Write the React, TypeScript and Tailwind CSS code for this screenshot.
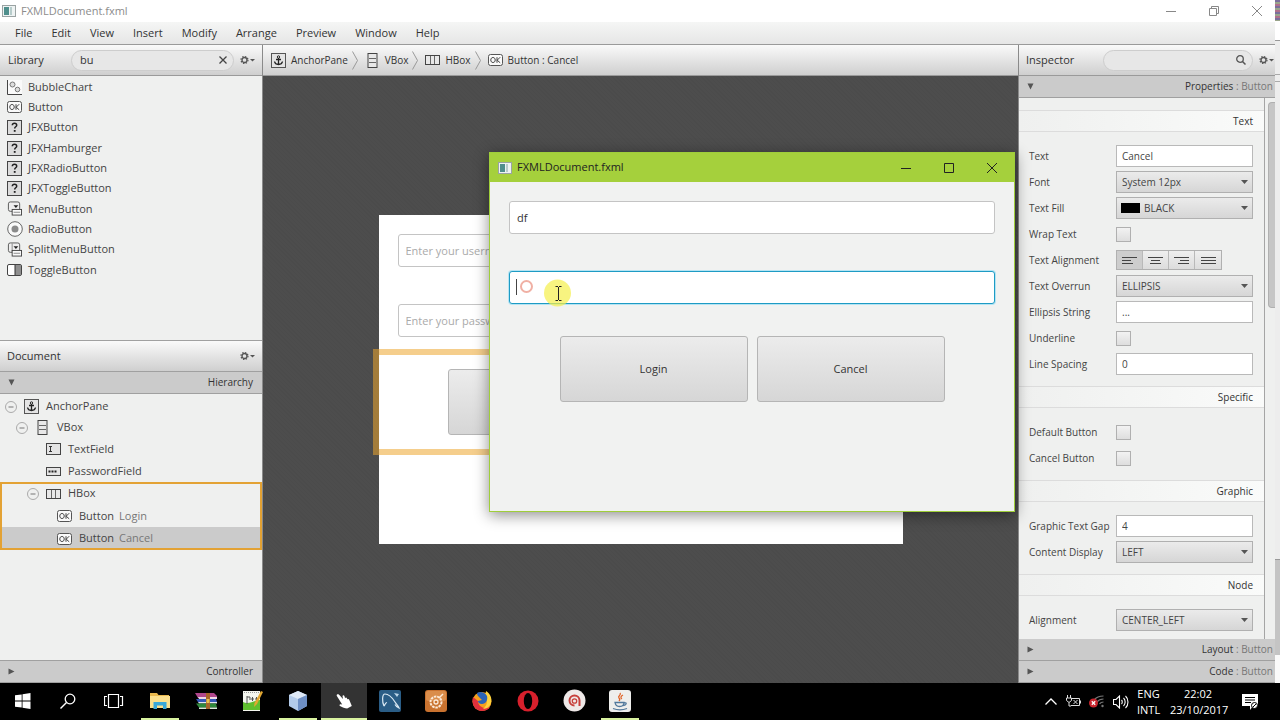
import { useState, type ReactNode } from "react";
import clsx from "clsx";

const MENUS = ["File", "Edit", "View", "Insert", "Modify", "Arrange", "Preview", "Window", "Help"];

const HEADER_BG = "bg-gradient-to-b from-[#fafafa] to-[#cfcfcf]";

/* ---------- component icons ---------- */

function OkIcon() {
  return (
    <svg width="15" height="12" viewBox="0 0 15 12">
      <rect x="0.5" y="0.5" width="14" height="11" rx="2" fill="#fafafa" stroke="#555" />
      <path d="M5 3.5c-1.4 0-2.2 1-2.2 2.5S3.600 8.500 5 8.500 7.200 7.500 7.200 6 6.400 3.500 5 3.500zM9 3.200v5.600M12.200 3.200 9.200 6.200l3 2.600" fill="none" stroke="#444" />
    </svg>
  );
}

function UnknownIcon() {
  return (
    <svg width="15" height="15" viewBox="0 0 15 15">
      <rect x="0.5" y="0.5" width="14" height="14" fill="#dcdcdc" stroke="#444" />
      <path d="M5.300 5.300c.1-1.400 1-2 2.200-2s2.200.7 2.200 1.900c0 1.600-2 1.600-2 3.300" fill="none" stroke="#222" strokeWidth="1.500" />
      <rect x="6.800" y="10" width="1.800" height="1.800" fill="#222" />
    </svg>
  );
}

function BubbleIcon() {
  return (
    <svg width="15" height="15" viewBox="0 0 15 15">
      <path d="M1 0h14v14H1z" fill="#fafafa" />
      <path d="M0.500 0v14.500H15" fill="none" stroke="#444" />
      <circle cx="5.500" cy="4.500" r="2.500" fill="#ddd" stroke="#777" />
      <circle cx="10.500" cy="9.500" r="2.300" fill="#ddd" stroke="#777" />
    </svg>
  );
}

function MenuButtonIcon({ split = false }: { split?: boolean }) {
  return (
    <svg width="16" height="15" viewBox="0 0 16 15">
      <rect x="1.500" y="0.500" width="12" height="10" rx="2" fill="#eee" stroke="#555" />
      {split ? <path d="M5.500 1v9" stroke="#888" /> : null}
      <path d="M7 4h5l-2.500 3z" fill="#222" />
      <rect x="5.500" y="8.500" width="10" height="6" fill="#fafafa" stroke="#444" />
      <path d="M7 11.500h7" stroke="#888" />
    </svg>
  );
}

function RadioIcon() {
  return (
    <svg width="16" height="16" viewBox="0 0 16 16" className="shrink-0">
      <circle cx="8" cy="8" r="7.300" fill="#fafafa" stroke="#666" />
      <circle cx="8" cy="8" r="3.500" fill="#8b8b8b" />
    </svg>
  );
}

function ToggleIcon() {
  return (
    <svg width="15" height="12" viewBox="0 0 15 12">
      <rect x="0.500" y="0.500" width="14" height="11" rx="1.500" fill="#fff" stroke="#444" />
      <path d="M8 1h6v10H8z" fill="#8f8f8f" />
      <path d="M8 1v10" stroke="#333" />
    </svg>
  );
}

function AnchorIcon() {
  return (
    <svg width="15" height="15" viewBox="0 0 15 15">
      <rect x="0.500" y="0.500" width="14" height="14" fill="#e4e4e4" stroke="#555" />
      <circle cx="7.500" cy="4" r="1.200" fill="none" stroke="#222" />
      <path d="M7.500 5v6.500M5 6.500h5M3.500 8.500c.4 2.300 2 3 4 3s3.600-.7 4-3" fill="none" stroke="#222" strokeWidth="1.300" />
    </svg>
  );
}

function VBoxIcon() {
  return (
    <svg width="15" height="15" viewBox="0 0 15 15">
      <rect x="3" y="0.500" width="9" height="14" fill="#e8e8e8" stroke="#444" />
      <path d="M4 5.500h7M4 9.500h7" stroke="#666" />
    </svg>
  );
}

function HBoxIcon() {
  return (
    <svg width="15" height="10" viewBox="0 0 15 10">
      <rect x="0.500" y="0.500" width="14" height="9" fill="#e8e8e8" stroke="#444" />
      <path d="M5.500 1v8M9.500 1v8" stroke="#666" />
    </svg>
  );
}

function TextFieldIcon() {
  return (
    <svg width="15" height="12" viewBox="0 0 15 12">
      <rect x="0.500" y="0.500" width="14" height="11" fill="#e4e4e4" stroke="#444" />
      <path d="M3 3.500h3M4.500 3.500v5M3 8.500h3" stroke="#333" />
    </svg>
  );
}

function PasswordIcon() {
  return (
    <svg width="15" height="9" viewBox="0 0 15 9">
      <rect x="0.500" y="0.500" width="14" height="8" fill="#e4e4e4" stroke="#444" />
      <path d="M2.500 3.500h2v2h-2zM5.500 3.500h2v2h-2zM8.500 3.500h2v2h-2z" fill="#222" />
    </svg>
  );
}

function AppIcon() {
  return (
    <svg width="14" height="12" viewBox="0 0 14 12">
      <rect x="0.500" y="0.500" width="13" height="11" fill="#eef3f3" stroke="#9aa3a3" />
      <path d="M2 2h5v8H2z" fill="#4f8f8c" />
      <path d="M8 2h2v8H8z" fill="#b7cccb" />
    </svg>
  );
}

function GearButton({ label }: { label: string }) {
  return (
    <button type="button" aria-label={label} className="flex h-4 shrink-0 items-center">
      <svg width="15" height="10" viewBox="0 0 15 10">
        <circle cx="4.500" cy="5" r="3.500" fill="none" stroke="#555" strokeDasharray="1.400 1.350" strokeWidth="1.200" />
        <circle cx="4.500" cy="5" r="2.500" fill="none" stroke="#555" strokeWidth="1.300" />
        <path d="M10 4h5L12.500 6.500z" fill="#555" />
      </svg>
    </button>
  );
}

function Triangle({ open = false }: { open?: boolean }) {
  return (
    <svg width="7" height="7" viewBox="0 0 7 7">
      <path d={open ? "M0.500 0.500h6l-3 6z" : "M0.500 0.500v6l6-3z"} fill="#555" />
    </svg>
  );
}

/* ---------- library / document ---------- */

const LIBRARY: { name: string; icon: ReactNode }[] = [
  { name: "BubbleChart", icon: <BubbleIcon /> },
  { name: "Button", icon: <OkIcon /> },
  { name: "JFXButton", icon: <UnknownIcon /> },
  { name: "JFXHamburger", icon: <UnknownIcon /> },
  { name: "JFXRadioButton", icon: <UnknownIcon /> },
  { name: "JFXToggleButton", icon: <UnknownIcon /> },
  { name: "MenuButton", icon: <MenuButtonIcon /> },
  { name: "RadioButton", icon: <RadioIcon /> },
  { name: "SplitMenuButton", icon: <MenuButtonIcon split /> },
  { name: "ToggleButton", icon: <ToggleIcon /> },
];

function SectionBar({ title, detail, open = false }: { title: string; detail?: string; open?: boolean }) {
  return (
    <button
      type="button"
      aria-expanded={open}
      className="flex h-[22px] w-full shrink-0 items-center justify-between border-b border-[#a0a0a0] bg-[#cbcbcb] pr-[2px] pl-2 text-[10px] text-[#333]"
    >
      <Triangle open={open} />
      <span className={detail ? "" : "pr-[7px]"}>
        {title}
        {detail ? <span className="text-[#777]"> : {detail}</span> : null}
      </span>
    </button>
  );
}

type TreeRowProps = {
  icon: ReactNode;
  name: string;
  info?: string;
  expandable?: boolean;
  className: string;
};

function TreeRow({ icon, name, info, expandable = false, className }: TreeRowProps) {
  return (
    <div className={clsx("flex items-center gap-[7px]", className)}>
      <span className="w-3 shrink-0">
        {expandable ? (
          <svg width="12" height="12" viewBox="0 0 12 12">
            <circle cx="6" cy="6" r="5.500" fill="none" stroke="#aaa" />
            <path d="M3.500 6h5" stroke="#777" />
          </svg>
        ) : null}
      </span>
      <span className="flex w-[15px] shrink-0 justify-center">{icon}</span>
      <span>
        {name}
        {info ? <span className="ml-[5px] text-[#777]">{info}</span> : null}
      </span>
    </div>
  );
}

function LeftPanel() {
  const [query, setQuery] = useState("bu");

  return (
    <aside className="flex w-[263px] shrink-0 flex-col border-r border-[#8a8a8a] bg-[#eff0ef] text-[11px] text-[#444]">
      <div className={clsx("flex h-[31px] items-center border-b border-[#9a9a9a] pr-[7px] pl-2", HEADER_BG)}>
        <label htmlFor="library-search" className="w-[63px] text-[#333]">Library</label>
        <div className="flex h-[21px] flex-1 items-center rounded-full border border-[#cdcdcd] bg-[#e7e7e7] pr-[6px] pl-2">
          <input
            id="library-search"
            value={query}
            onChange={(event) => setQuery(event.target.value)}
            className="w-full min-w-0 bg-transparent text-[#333] outline-none"
          />
          <button type="button" aria-label="Clear search" onClick={() => setQuery("")}>
            <svg width="8" height="8" viewBox="0 0 8 8">
              <path d="m0.500 0.500 7 7M7.500 0.500l-7 7" stroke="#444" strokeWidth="1.300" />
            </svg>
          </button>
        </div>
        <div className="ml-[6px]">
          <GearButton label="Library options" />
        </div>
      </div>

      <ul className="mt-px grid h-[203px] auto-rows-fr">
        {LIBRARY.map((item) => (
          <li key={item.name} className="flex items-center gap-[6px] pl-[7px]">
            <span className="flex w-[15px] shrink-0 justify-center">{item.icon}</span>
            {item.name}
          </li>
        ))}
      </ul>

      <div className={clsx("mt-[60px] flex h-8 items-center justify-between border-y border-[#a0a0a0] px-[7px]", HEADER_BG)}>
        <span className="text-[#333]">Document</span>
        <GearButton label="Document options" />
      </div>
      <SectionBar title="Hierarchy" open />

      <div className="pt-[2px]">
        <TreeRow className="h-[21px] pl-[5px]" icon={<AnchorIcon />} name="AnchorPane" expandable />
        <TreeRow className="h-[21px] pl-4" icon={<VBoxIcon />} name="VBox" expandable />
        <TreeRow className="h-[22px] pl-[27px]" icon={<TextFieldIcon />} name="TextField" />
        <TreeRow className="h-[22px] pl-[27px]" icon={<PasswordIcon />} name="PasswordField" />
        <div className="outline-2 -outline-offset-2 outline-[#e3a234]">
          <TreeRow className="h-[23px] pl-[27px]" icon={<HBoxIcon />} name="HBox" expandable />
          <TreeRow className="h-[22px] pl-[38px]" icon={<OkIcon />} name="Button" info="Login" />
          <TreeRow className="h-[23px] bg-[#cbcbcb] pl-[38px]" icon={<OkIcon />} name="Button" info="Cancel" />
        </div>
      </div>

      <div className="mt-auto border-t border-[#a0a0a0]">
        <SectionBar title="Controller" />
      </div>
    </aside>
  );
}

/* ---------- canvas ---------- */

function Crumb({ icon, name, last = false }: { icon: ReactNode; name: string; last?: boolean }) {
  return (
    <li className="flex items-center">
      <button type="button" className="flex items-center gap-[5px]">
        {icon}
        {name}
      </button>
      {last ? null : (
        <svg width="6" height="19" viewBox="0 0 6 19" className="mr-[7px] ml-1">
          <path d="m0.500 0.500 5 9-5 9" fill="none" stroke="#999" />
        </svg>
      )}
    </li>
  );
}

type LoginFormProps = {
  name: string;
  user?: string;
  selected?: boolean;
  focused?: boolean;
};

function LoginForm({ name, user = "", selected = false, focused = false }: LoginFormProps) {
  const field =
    "block h-[33px] w-full rounded-[3px] border bg-white px-[7px] text-[11px] text-[#333] outline-none placeholder:text-[#aaa]";
  const button =
    "h-[66px] w-[188px] rounded-[3px] border border-[#b5b5b5] bg-gradient-to-b from-[#ececec] to-[#d6d6d6] text-[11px] text-[#333]";

  return (
    <form className="flex flex-col pt-[19px] pb-[95px]" onSubmit={(event) => event.preventDefault()}>
      <div className="flex flex-col gap-[37px] px-[19px]">
        <input
          aria-label={`${name} username`}
          defaultValue={user}
          placeholder="Enter your username"
          className={clsx(field, "border-[#c4c4c4]")}
        />
        <input
          type="password"
          aria-label={`${name} password`}
          placeholder={focused ? "" : "Enter your password"}
          className={clsx(field, focused ? "border-[#1e9bc4] ring-1 ring-[#b5e4f3]" : "border-[#c4c4c4]")}
        />
      </div>
      <div
        className={clsx(
          "mt-[18px] flex justify-center gap-[9px] py-[14px]",
          selected && "outline-6 outline-[#eda52e]/55",
        )}
      >
        <button type="submit" className={button}>Login</button>
        <button type="button" className={button}>Cancel</button>
      </div>
    </form>
  );
}

function PreviewWindow() {
  return (
    <section className="absolute top-[76px] left-[226px] z-10 w-[526px] border border-[#9fce3a] bg-[#f1f2f1] shadow-[0_3px_14px_rgba(0,0,0,0.45)]">
      <header className="flex h-[29px] items-center bg-[#a5d03c] pr-px pl-2 text-[11px] text-[#222]">
        <AppIcon />
        <h2 className="ml-[5px] flex-1">FXMLDocument.fxml</h2>
        <button type="button" aria-label="Minimize preview" className="flex h-full w-[43px] items-center justify-center">
          <svg width="10" height="10" viewBox="0 0 10 10"><path d="M0 5.500h10" stroke="#222" /></svg>
        </button>
        <button type="button" aria-label="Maximize preview" className="flex h-full w-[43px] items-center justify-center">
          <svg width="10" height="10" viewBox="0 0 10 10"><path d="M0.500 0.500h9v9h-9z" fill="none" stroke="#222" /></svg>
        </button>
        <button type="button" aria-label="Close preview" className="flex h-full w-[43px] items-center justify-center">
          <svg width="10" height="10" viewBox="0 0 10 10"><path d="m0 0 10 10M10 0 0 10" stroke="#222" /></svg>
        </button>
      </header>
      <LoginForm name="Preview" user="df" focused />

      {/* text caret, busy ring and the highlighted I-beam pointer */}
      <svg width="60" height="36" viewBox="0 0 60 36" className="pointer-events-none absolute top-[118px] left-6">
        <path d="M2.500 8v16" stroke="#444" />
        <circle cx="12.500" cy="15.500" r="5.500" fill="none" stroke="#f0b0a4" strokeWidth="2" />
        <circle cx="43.500" cy="22" r="13.500" fill="#f5f04a" fillOpacity="0.700" />
        <path d="M41.500 15.500h2.500M45 15.500h2.500M44.500 16v13M41.500 29.500h2.500M45 29.500h2.500" stroke="#222" />
      </svg>
    </section>
  );
}

function Editor() {
  return (
    <main className="flex min-w-0 flex-1 flex-col">
      <nav aria-label="Selection path" className={clsx("flex h-[31px] items-center border-b border-[#9a9a9a] pl-2", HEADER_BG)}>
        <ol className="flex items-center text-[10px] text-[#333]">
          <Crumb icon={<AnchorIcon />} name="AnchorPane" />
          <Crumb icon={<VBoxIcon />} name="VBox" />
          <Crumb icon={<HBoxIcon />} name="HBox" />
          <Crumb icon={<OkIcon />} name="Button : Cancel" last />
        </ol>
      </nav>
      <div className="relative flex flex-1 items-center justify-center bg-[repeating-linear-gradient(45deg,#4b4b4b_0_1px,#4d4d4d_1px_3px)]">
        <div className="w-[524px] bg-white">
          <LoginForm name="Design" selected />
        </div>
        <PreviewWindow />
      </div>
    </main>
  );
}

/* ---------- inspector ---------- */

function Group({ title, children }: { title: string; children: ReactNode }) {
  return (
    <section className="last:-mb-2">
      <h3 className="flex h-[22px] items-center justify-end border-y border-[#dcdcdc] bg-gradient-to-r from-[#eff0ef] to-[#fafbfa] pr-[11px] text-[10px] text-[#333]">
        {title}
      </h3>
      <div className="pt-[11px] pb-[9px]">{children}</div>
    </section>
  );
}

function Row({ label, id, children }: { label: string; id: string; children: ReactNode }) {
  return (
    <div className="flex h-[26px] items-center pr-[11px] pl-[10px]">
      <label htmlFor={id} className="w-[87px] shrink-0 whitespace-nowrap">{label}</label>
      {children}
    </div>
  );
}

function TextRow({ label, id, value }: { label: string; id: string; value: string }) {
  return (
    <Row label={label} id={id}>
      <input id={id} defaultValue={value} className="h-[22px] w-full min-w-0 border border-[#b9b9b9] bg-white px-[5px] outline-none" />
    </Row>
  );
}

function SelectRow({ label, id, value, swatch = false }: { label: string; id: string; value: string; swatch?: boolean }) {
  return (
    <Row label={label} id={id}>
      <div className="relative h-[22px] w-full">
        <select
          id={id}
          className={clsx(
            "h-full w-full appearance-none border border-[#b0b0b0] bg-gradient-to-b from-[#ebebeb] to-[#d6d6d6] outline-none",
            swatch ? "pl-[27px]" : "pl-[5px]",
          )}
        >
          <option>{value}</option>
        </select>
        {swatch ? <span className="pointer-events-none absolute top-[6px] left-[5px] h-[10px] w-[19px] bg-black" /> : null}
        <svg width="7" height="4" viewBox="0 0 7 4" className="pointer-events-none absolute top-[9px] right-[5px]">
          <path d="M0 0h7L3.500 4z" fill="#555" />
        </svg>
      </div>
    </Row>
  );
}

function CheckRow({ label, id }: { label: string; id: string }) {
  return (
    <Row label={label} id={id}>
      <input
        id={id}
        type="checkbox"
        className="h-[15px] w-[15px] appearance-none border border-[#b0b0b0] bg-gradient-to-b from-[#f2f2f2] to-[#dedede] checked:bg-[#888] checked:bg-none"
      />
    </Row>
  );
}

const ALIGNMENTS = [
  { name: "Left", path: "M0 1.500h15M0 4.500h9M0 7.500h11" },
  { name: "Center", path: "M0 1.500h15M3 4.500h9M2 7.500h11" },
  { name: "Right", path: "M0 1.500h15M6 4.500h9M4 7.500h11" },
  { name: "Justify", path: "M0 1.500h15M0 4.500h15M0 7.500h15" },
];

function AlignmentRow() {
  const [active, setActive] = useState("Left");

  return (
    <div className="flex h-[26px] items-center pl-[10px]">
      <span className="w-[87px] shrink-0">Text Alignment</span>
      <div role="group" aria-label="Text Alignment" className="flex h-5 border border-[#b0b0b0]">
        {ALIGNMENTS.map((item) => (
          <button
            key={item.name}
            type="button"
            aria-label={item.name}
            aria-pressed={active === item.name}
            onClick={() => setActive(item.name)}
            className={clsx(
              "flex w-[26px] items-center justify-center border-r border-[#b9b9b9] last:border-r-0",
              active === item.name ? "bg-[#cdcdcd]" : "bg-gradient-to-b from-[#efefef] to-[#dcdcdc]",
            )}
          >
            <svg width="15" height="9" viewBox="0 0 15 9">
              <path d={item.path} stroke="#444" />
            </svg>
          </button>
        ))}
      </div>
    </div>
  );
}

function Inspector() {
  return (
    <aside className="flex w-[257px] shrink-0 flex-col border-l border-[#8a8a8a] bg-[#eff0ef] text-[11px] text-[#444]">
      <div className={clsx("flex h-[31px] items-center border-b border-[#9a9a9a] pr-px pl-[7px]", HEADER_BG)}>
        <label htmlFor="inspector-search" className="w-[77px] text-[#333]">Inspector</label>
        <div className="flex h-[21px] flex-1 items-center rounded-full border border-[#cdcdcd] bg-[#e7e7e7] pr-[6px] pl-2">
          <input id="inspector-search" className="w-full min-w-0 bg-transparent outline-none" />
          <svg width="10" height="10" viewBox="0 0 10 10" className="shrink-0">
            <circle cx="4" cy="4" r="3.300" fill="none" stroke="#555" strokeWidth="1.300" />
            <path d="m6.500 6.500 3 3" stroke="#555" strokeWidth="1.500" />
          </svg>
        </div>
        <div className="ml-[6px]">
          <GearButton label="Inspector options" />
        </div>
      </div>
      <SectionBar title="Properties" detail="Button" open />

      <div className="flex flex-1">
        <div className="min-w-0 flex-1 border-r border-[#a5a5a5] pt-3 text-[10px]">
          <Group title="Text">
            <TextRow label="Text" id="text" value="Cancel" />
            <SelectRow label="Font" id="font" value="System 12px" />
            <SelectRow label="Text Fill" id="text-fill" value="BLACK" swatch />
            <CheckRow label="Wrap Text" id="wrap-text" />
            <AlignmentRow />
            <SelectRow label="Text Overrun" id="text-overrun" value="ELLIPSIS" />
            <TextRow label="Ellipsis String" id="ellipsis-string" value="..." />
            <CheckRow label="Underline" id="underline" />
            <TextRow label="Line Spacing" id="line-spacing" value="0" />
          </Group>
          <Group title="Specific">
            <CheckRow label="Default Button" id="default-button" />
            <CheckRow label="Cancel Button" id="cancel-button" />
          </Group>
          <Group title="Graphic">
            <TextRow label="Graphic Text Gap" id="graphic-text-gap" value="4" />
            <SelectRow label="Content Display" id="content-display" value="LEFT" />
          </Group>
          <Group title="Node">
            <SelectRow label="Alignment" id="alignment" value="CENTER_LEFT" />
          </Group>
        </div>
        <div className="w-[10px] shrink-0 pt-1 pl-[3px]">
          <div className="h-[206px] rounded-l-[4px] border border-r-0 border-[#b0b0b0] bg-[#c6c6c6]" />
        </div>
      </div>

      <SectionBar title="Layout" detail="Button" />
      <SectionBar title="Code" detail="Button" />
    </aside>
  );
}

/* ---------- taskbar ---------- */

const WindowsLogo = (
  <svg width="16" height="16" viewBox="0 0 16 16">
    <path d="M0 2.300 6.700 1.400v6.200H0zM7.500 1.300 15.500.1v7.500h-8zM0 8.400h6.700v6.200L0 13.700zM7.500 8.400h8v7.500l-8-1.200z" fill="#fff" />
  </svg>
);

const SearchIcon = (
  <svg width="16" height="16" viewBox="0 0 16 16">
    <circle cx="10" cy="6" r="4.800" fill="none" stroke="#fff" strokeWidth="1.300" />
    <path d="m6.500 9.500-6 6" stroke="#fff" strokeWidth="1.400" />
  </svg>
);

const TaskViewIcon = (
  <svg width="20" height="14" viewBox="0 0 20 14">
    <path d="M4.500 0.500h10v13h-10zM3 2.500H0.500v9H3M16 2.500h2.500v9H16" fill="none" stroke="#fff" strokeWidth="1.200" />
  </svg>
);

const ExplorerIcon = (
  <svg width="22" height="20" viewBox="0 0 22 20">
    <path d="M1 2h7l1.500 2H20v13H1z" fill="#e9b84d" />
    <path d="M1 5h20v12H1z" fill="#fbdf8d" />
    <path d="M4.500 18v-7h13v7h-3.500v-3.500H8V18z" fill="#3aa7d9" />
  </svg>
);

const WinRarIcon = (
  <svg width="24" height="20" viewBox="0 0 24 20">
    <path d="M1 2h19l3 3v2H4z" fill="#b0468c" />
    <path d="M4 6h19v2H5z" fill="#f0d9e6" />
    <path d="M2 8h20l1 3H4z" fill="#3558b8" />
    <path d="M4 11h19v1.500H5z" fill="#e6e6f0" />
    <path d="M2 12.500h20l1 4H5z" fill="#2f8a3c" />
    <path d="M5 16.500h18V18H5z" fill="#d8ead8" />
    <path d="M12 2h4v16h-4z" fill="#a8642a" />
    <path d="M12.500 8h3v4h-3z" fill="#e8c24e" />
  </svg>
);

const NotepadIcon = (
  <svg width="21" height="22" viewBox="0 0 21 22">
    <path d="M1 1h17v20H1z" fill="#f4f6ee" />
    <path d="M1 12c6 3 11-2 17-2v10H1z" fill="#5fbf2e" />
    <path d="M5 6v8M5 7h3v3M10.500 7v4M9 9h3M14.500 7v4M13 9h3" fill="none" stroke="#555" />
    <path d="M2 2.500h15" stroke="#999" strokeDasharray="1 1" />
    <path d="m19 1 2 1-6 12-3 3 .5-4z" fill="#e2a731" />
  </svg>
);

const CubeIcon = (
  <svg width="22" height="22" viewBox="0 0 22 22">
    <path d="m11 1 9 4v11l-9 5-9-5V5z" fill="#b3cbea" />
    <path d="m11 1 9 4-9 4-9-4z" fill="#dfe9f7" />
    <path d="m11 9 9-4v11l-9 5z" fill="#6e8fc4" />
  </svg>
);

const HandIcon = (
  <svg width="17" height="16" viewBox="0 0 17 16">
    <path d="M1 1.500c1-.8 2 0 2.600.8L7 6l-.5-3c.3-1 1.700-.8 2 .2l.6 2c.4-.9 1.700-.7 2 .2l.3 1c.5-.7 1.500-.5 1.800.4L15 11l.8 2-4.600 2.600c-2.400-.2-4.600-1.200-7.200-2.600-1-.7-.5-2 .8-1.800l1.400.2L1 3.300C.6 2.700.500 2 1 1.500z" fill="#fff" />
  </svg>
);

const MySqlIcon = (
  <svg width="22" height="22" viewBox="0 0 22 22">
    <rect width="22" height="22" rx="2" fill="#2a5d86" />
    <path d="M5 16C3 12 3 4 6 4c5 0 8 5 10 8 1 2 3 3 4 6-2-1-3-1.500-4-3.500M5 16c1-1 1-3 3-3.500" fill="none" stroke="#dceaf4" strokeWidth="1.200" />
    <path d="m15 3 5 1-2 3z" fill="#bcd6e8" />
  </svg>
);

const OrangeIcon = (
  <svg width="22" height="22" viewBox="0 0 22 22">
    <rect width="22" height="22" rx="3" fill="#c9722f" />
    <rect x="1" y="1" width="20" height="10" rx="2" fill="#da8d4b" />
    <circle cx="11" cy="12" r="5.500" fill="none" stroke="#fbe9d8" strokeWidth="2" strokeDasharray="2.500 .8" />
    <circle cx="11" cy="12" r="2" fill="none" stroke="#fbe9d8" strokeWidth="1.300" />
    <path d="m14 8 4-4" stroke="#fbe9d8" strokeWidth="1.500" />
  </svg>
);

const FirefoxIcon = (
  <svg width="22" height="22" viewBox="0 0 22 22">
    <circle cx="11" cy="11.500" r="9.500" fill="#f5a01e" />
    <path d="M2 7c-2 7 2 14 9 14 4 0 7-2 8-4-6 3-12-1-12-6z" fill="#e2303c" />
    <path d="M15 1c5 3 7 9 4 14-2 3-5 4-7 4 5-4 5-9 1-13 1-1 2-3 2-5z" fill="#ffd33d" />
    <path d="M6 3c3-2 8-1 10 3 1 4-1 8-5 8-3 0-4-2-4-3l4-1-3-3c-1-1-2-2-2-4z" fill="#2b63b8" />
  </svg>
);

const OperaIcon = (
  <svg width="22" height="22" viewBox="0 0 22 22">
    <ellipse cx="11" cy="11" rx="10.500" ry="10.500" fill="#d8202c" />
    <ellipse cx="11" cy="11" rx="4.200" ry="8" fill="#000" />
  </svg>
);

const RoundIcon = (
  <svg width="23" height="23" viewBox="0 0 23 23">
    <circle cx="11.500" cy="11.500" r="11" fill="#efe9e8" />
    <path d="M16.500 17v-5.500a5 5 0 1 0-5 5" fill="none" stroke="#c8403c" strokeWidth="2" />
    <circle cx="11.500" cy="12" r="2.200" fill="none" stroke="#c8403c" strokeWidth="1.300" />
  </svg>
);

const JavaIcon = (
  <svg width="22" height="22" viewBox="0 0 22 22">
    <rect width="22" height="22" rx="3" fill="#eeeeec" />
    <path d="M11 3c2 2-3 3-1 5 1 1 1 2 0 3M14 5c-2 1-3 3-1 4" fill="none" stroke="#e0652a" strokeWidth="1.300" />
    <path d="M6 12.500h9c0 3-2 4-4.500 4S6.500 15.500 6 12.500zM15 13c3-1 3 2-.5 2.500M4 18.500c4 1.500 10 1.500 14 0" fill="none" stroke="#52799c" strokeWidth="1.300" />
  </svg>
);

const TASKS: { name: string; icon: ReactNode; state?: "open" | "active" }[] = [
  { name: "Start", icon: WindowsLogo },
  { name: "Search", icon: SearchIcon },
  { name: "Task View", icon: TaskViewIcon },
  { name: "File Explorer", icon: ExplorerIcon, state: "open" },
  { name: "WinRAR", icon: WinRarIcon },
  { name: "Notepad++", icon: NotepadIcon },
  { name: "NetBeans", icon: CubeIcon, state: "open" },
  { name: "Scene Builder", icon: HandIcon, state: "active" },
  { name: "MySQL Workbench", icon: MySqlIcon },
  { name: "Server", icon: OrangeIcon },
  { name: "Firefox", icon: FirefoxIcon },
  { name: "Opera", icon: OperaIcon },
  { name: "Recorder", icon: RoundIcon },
  { name: "Java", icon: JavaIcon, state: "open" },
];

function Taskbar() {
  return (
    <footer className="flex h-[37px] shrink-0 items-stretch bg-black text-white">
      {TASKS.map((task) => (
        <button
          key={task.name}
          type="button"
          aria-label={task.name}
          className={clsx(
            "flex w-[46px] shrink-0 flex-col items-center first:w-[45px]",
            task.state === "active" && "bg-[#333]",
          )}
        >
          <span className="flex flex-1 items-center">{task.icon}</span>
          <span
            className={clsx(
              "h-[2px]",
              task.state === "active" && "w-full bg-[#d9f3a0]",
              task.state === "open" && "w-[38px] bg-[#d9f3a0]",
            )}
          />
        </button>
      ))}

      <div className="ml-auto flex items-center pr-[22px]">
        <svg width="12" height="7" viewBox="0 0 12 7">
          <path d="m0.500 6.500 5.500-5.500 5.500 5.500" fill="none" stroke="#fff" strokeWidth="1.300" />
        </svg>
        <svg width="15" height="13" viewBox="0 0 15 13" className="ml-[9px]">
          <path d="M1.500 0v3M4.500 0v3M0.500 3h5v2.500l-2.500 2-2.500-2zM3 7.500V11h2M6 3.500h7.500v7H5M14.500 5.500v3M7.500 5l4 4M11.500 5l-4 4" fill="none" stroke="#ddd" />
        </svg>
        <svg width="17" height="13" viewBox="0 0 17 13" className="ml-2">
          <path d="M5 5c2.500-3 6-4 9.500-4M8 7c1.500-2 4-3 6.500-3M10.500 9c1-1.500 2.500-2 4-2" fill="none" stroke="#777" strokeWidth="1.200" />
          <circle cx="13.500" cy="11" r="1.200" fill="#777" />
          <circle cx="4.500" cy="8" r="4.500" fill="#c9252d" />
          <path d="m2.800 6.300 3.400 3.400M6.200 6.300 2.800 9.700" stroke="#fff" strokeWidth="1.300" />
        </svg>
        <svg width="16" height="14" viewBox="0 0 16 14" className="ml-[7px]">
          <path d="M0.500 4.500h2.500l3.500-3.500v12L3 9.500H0.500zM8.500 5c1 1 1 3 0 4M10.500 3c2.200 2 2.200 6 0 8M12.500 1c3.300 3 3.300 9 0 12" fill="none" stroke="#fff" strokeWidth="1.100" />
        </svg>
        <div className="ml-2 w-[23px] text-center text-[11px] leading-4">
          <div>ENG</div>
          <div>INTL</div>
        </div>
        <div className="ml-[10px] w-[56px] text-center text-[11px] leading-4">
          <div>22:02</div>
          <div>23/10/2017</div>
        </div>
        <svg width="16" height="16" viewBox="0 0 16 16" className="ml-4">
          <path d="M0 0h16v12h-5l-3 4v-4H0z" fill="#fff" />
          <path d="M3 3.500h10M3 6h10M3 8.500h6" stroke="#000" />
          <circle cx="12.500" cy="11.500" r="3" fill="#fff" stroke="#000" />
          <path d="m11 13 3-3" stroke="#000" />
        </svg>
      </div>
    </footer>
  );
}

/* slice of the window behind that shows past the right edge */
function BackgroundWindow() {
  return (
    <div className="flex w-[5px] shrink-0 flex-col bg-[#ededed]">
      <div className="h-[21px] bg-[repeating-linear-gradient(180deg,#7a6f9c_0_2px,#9aa58a_2px_4px,#b0708c_4px_6px)]" />
      <div className="h-5 border-b border-[#999] bg-white" />
      <div className="h-[34px] border-b border-[#aaa]" />
      <div className="h-[7px] border-b border-[#aaa]" />
      <div className="flex-1" />
      <div className="h-[96px] border-t border-[#999] bg-[#c4c4c4]" />
      <div className="h-7 bg-[#fafafa]" />
    </div>
  );
}

export default function App() {
  return (
    <div className="flex min-h-screen flex-col bg-[#eff0ef] font-['Open_Sans','Noto_Sans',sans-serif]">
      <div className="flex flex-1">
        <div className="flex min-w-0 flex-1 flex-col">
          <header className="flex h-[22px] items-center bg-white pl-[2px] text-[11px] text-[#8c8c8c]">
            <AppIcon />
            <h1 className="ml-[5px] flex-1">FXMLDocument.fxml</h1>
            <button type="button" aria-label="Minimize" className="flex h-full w-[43px] items-center justify-center">
              <svg width="10" height="10" viewBox="0 0 10 10"><path d="M0 5.500h10" stroke="#888" /></svg>
            </button>
            <button type="button" aria-label="Restore" className="flex h-full w-[43px] items-center justify-center">
              <svg width="10" height="10" viewBox="0 0 10 10"><path d="M0.500 2.500h7v7h-7zM2.500 2.500v-2h7v7h-2" fill="none" stroke="#888" /></svg>
            </button>
            <button type="button" aria-label="Close" className="mr-[-3px] flex h-full w-[43px] items-center justify-center">
              <svg width="10" height="10" viewBox="0 0 10 10"><path d="m0 0 10 10M10 0 0 10" stroke="#888" /></svg>
            </button>
          </header>

          <nav className="flex h-[23px] items-center border-b border-[#9a9a9a] bg-gradient-to-b from-[#f5f6f5] to-[#e6e6e6] pl-[5px] text-[11px] text-[#333]">
            {MENUS.map((menu) => (
              <button key={menu} type="button" className="h-full pr-[9px] pl-[10px]">
                {menu}
              </button>
            ))}
          </nav>

          <div className="flex flex-1">
            <LeftPanel />
            <Editor />
            <Inspector />
          </div>
        </div>
        <BackgroundWindow />
      </div>
      <Taskbar />
    </div>
  );
}
